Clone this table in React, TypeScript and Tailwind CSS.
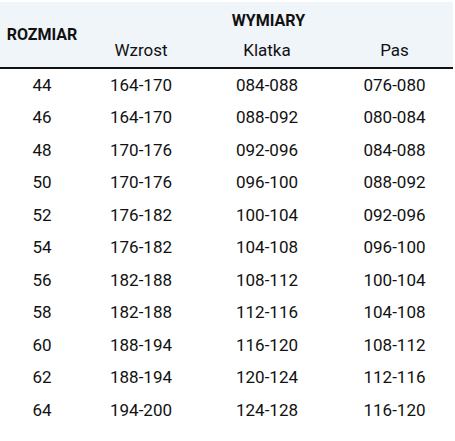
import React from "react";

const rows = [
  ["44", "164-170", "084-088", "076-080"],
  ["46", "164-170", "088-092", "080-084"],
  ["48", "170-176", "092-096", "084-088"],
  ["50", "170-176", "096-100", "088-092"],
  ["52", "176-182", "100-104", "092-096"],
  ["54", "176-182", "104-108", "096-100"],
  ["56", "182-188", "108-112", "100-104"],
  ["58", "182-188", "112-116", "104-108"],
  ["60", "188-194", "116-120", "108-112"],
  ["62", "188-194", "120-124", "112-116"],
  ["64", "194-200", "124-128", "116-120"],
];

export default function App() {
  return (
    <div
      className="w-[455px] h-[441px] bg-white pt-[2px] text-[#111]"
      style={{ fontFamily: "Roboto, 'DejaVu Sans Condensed', sans-serif" }}
    >
      <div className="w-[453px]">
        {/* header */}
        <div className="flex h-[67px] bg-[#f0f5fa] border-b-2 border-[#111]">
          <div className="w-[84px] flex items-center justify-center font-bold text-[16px]">
            ROZMIAR
          </div>
          <div className="flex-1 flex flex-col">
            <div className="h-[33px] flex items-end justify-center font-bold text-[16px] pb-[2px]">
              WYMIARY
            </div>
            <div className="flex flex-1 items-center text-[17px]">
              <div className="w-[114px] text-center">Wzrost</div>
              <div className="w-[138px] text-center">Klatka</div>
              <div className="flex-1 text-center">Pas</div>
            </div>
          </div>
        </div>
        {/* body */}
        {rows.map((r) => (
          <div key={r[0]} className="flex h-[32.5px] items-center text-[17px]">
            <div className="w-[84px] text-center">{r[0]}</div>
            <div className="w-[114px] text-center">{r[1]}</div>
            <div className="w-[138px] text-center">{r[2]}</div>
            <div className="flex-1 text-center">{r[3]}</div>
          </div>
        ))}
      </div>
    </div>
  );
}
